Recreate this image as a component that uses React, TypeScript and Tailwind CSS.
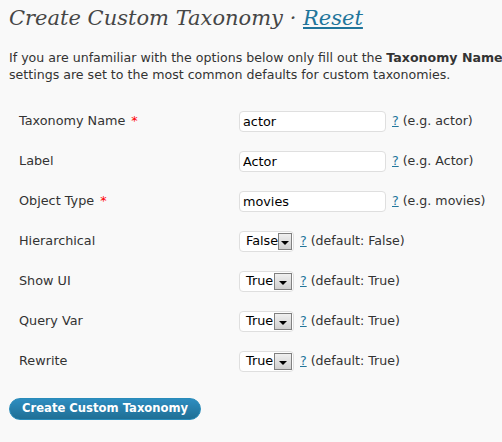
const textRows = [
  { label: "Taxonomy Name", required: true, value: "actor", hint: "(e.g. actor)" },
  { label: "Label", required: false, value: "Actor", hint: "(e.g. Actor)" },
  { label: "Object Type", required: true, value: "movies", hint: "(e.g. movies)" },
];

const selectRows = [
  { label: "Hierarchical", value: "False", hint: "(default: False)" },
  { label: "Show UI", value: "True", hint: "(default: True)" },
  { label: "Query Var", value: "True", hint: "(default: True)" },
  { label: "Rewrite", value: "True", hint: "(default: True)" },
];

const verdana = "font-['Verdana','DejaVu_Sans',sans-serif]";

function Label({ text, required }: { text: string; required?: boolean }) {
  return (
    <div className="w-[239px] shrink-0 pl-[19px] text-[12.8px] text-[#333]">
      {text}
      {required && <span className="ml-[6px] text-[#ff0000]">*</span>}
    </div>
  );
}

function Help({ hint }: { hint: string }) {
  return (
    <span className="ml-[6px] whitespace-nowrap text-[12.6px] text-[#333]">
      <a href="#" className="text-[#21759b] underline">
        ?
      </a>{" "}
      {hint}
    </span>
  );
}

function FakeSelect({ value }: { value: string }) {
  return (
    <div className="flex h-[21px] w-[55px] items-center justify-between rounded-[4px] border border-[#dfdfdf] bg-white pl-[6px] pr-[1px]">
      <span className="text-[12.8px] text-black">{value}</span>
      <span className="flex h-[17px] w-[18px] items-center justify-center border border-[#808080] bg-gradient-to-b from-[#f0f0f0] to-[#cfcfcf]">
        <span className="mt-[3px] h-0 w-0 border-x-[4px] border-t-[4px] border-x-transparent border-t-black" />
      </span>
    </div>
  );
}

export default function App() {
  return (
    <div className={`h-[442px] w-[502px] overflow-hidden bg-[#f9f9f9] ${verdana}`}>
      <h2 className="whitespace-nowrap pl-[9px] pt-[2px] font-['Georgia','DejaVu_Serif',serif] text-[21px] italic leading-[32px] text-[#464646]">
        Create Custom Taxonomy ·{" "}
        <a href="#" className="text-[#21759b] underline">
          Reset
        </a>
      </h2>
      <p className="mt-[15px] whitespace-nowrap pl-[9px] text-[12.6px] leading-[17px] text-[#333]">
        If you are unfamiliar with the options below only fill out the{" "}
        <b>Taxonomy Name</b> and <b>Object Type</b> fields. The other
        <br />
        settings are set to the most common defaults for custom taxonomies.
      </p>

      <div className="mt-[18px] flex flex-col">
        {textRows.map((r) => (
          <div key={r.label} className="flex h-[40px] items-center">
            <Label text={r.label} required={r.required} />
            <input
              readOnly
              value={r.value}
              className="h-[21px] w-[147px] rounded-[4px] border border-[#dfdfdf] bg-white px-[3px] text-[12.8px] text-black outline-none"
            />
            <Help hint={r.hint} />
          </div>
        ))}
        {selectRows.map((r) => (
          <div key={r.label} className="flex h-[40px] items-center">
            <Label text={r.label} />
            <FakeSelect value={r.value} />
            <Help hint={r.hint} />
          </div>
        ))}
      </div>

      <div className="mt-[14px] pl-[9px]">
        <button className="h-[22px] rounded-full border border-[#298cba] bg-gradient-to-b from-[#2e8dc0] to-[#1f6f95] px-[12px] text-[11.6px] font-bold text-white">
          Create Custom Taxonomy
        </button>
      </div>
    </div>
  );
}
